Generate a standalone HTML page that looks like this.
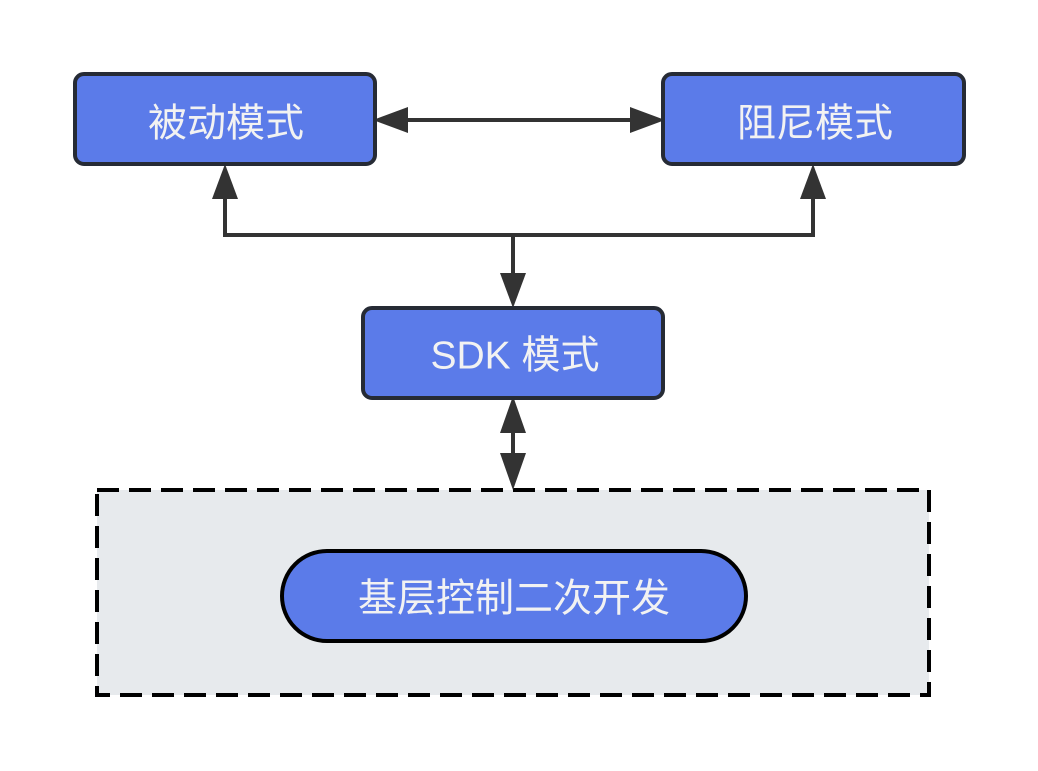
<!DOCTYPE html>
<html><head><meta charset="utf-8"><style>
html,body{margin:0;padding:0;background:#fff;}
svg{display:block}
text{font-family:"Liberation Sans","Noto Sans CJK SC",sans-serif;font-size:39px;fill:#f2f2f2;text-anchor:middle;dominant-baseline:central}
</style></head><body>
<svg width="1038" height="771" viewBox="0 0 1038 771" xmlns="http://www.w3.org/2000/svg">
<rect x="97" y="490" width="832" height="205" fill="#e7eaed" stroke="#000" stroke-width="4" stroke-dasharray="22,10"/>
<g stroke="#333" stroke-width="4" fill="none">
<line x1="405" y1="120" x2="635" y2="120"/>
<polyline points="225,195 225,235 813,235 813,195"/>
<line x1="513" y1="235" x2="513" y2="280"/>
<line x1="513" y1="430" x2="513" y2="456"/>
</g>
<g fill="#333">
<polygon points="373,120 408,107 408,133"/>
<polygon points="665,120 630,107 630,133"/>
<polygon points="225,164 212,199 238,199"/>
<polygon points="813,164 800,199 826,199"/>
<polygon points="513,308 500,273 526,273"/>
<polygon points="513,396 500,433 526,433"/>
<polygon points="513,490 500,453 526,453"/>
</g>
<g fill="#5b7be9" stroke="#262b35" stroke-width="4">
<rect x="75" y="74" width="300" height="90" rx="9"/>
<rect x="663" y="74" width="301" height="90" rx="9"/>
<rect x="363" y="308" width="300" height="90" rx="9"/>
<rect x="282" y="551" width="464" height="90" rx="45" stroke="#000"/>
</g>
<text x="226" y="124">被动模式</text>
<text x="815" y="124">阻尼模式</text>
<text x="515" y="356">SDK 模式</text>
<text x="514" y="599">基层控制二次开发</text>
</svg>
</body></html>
